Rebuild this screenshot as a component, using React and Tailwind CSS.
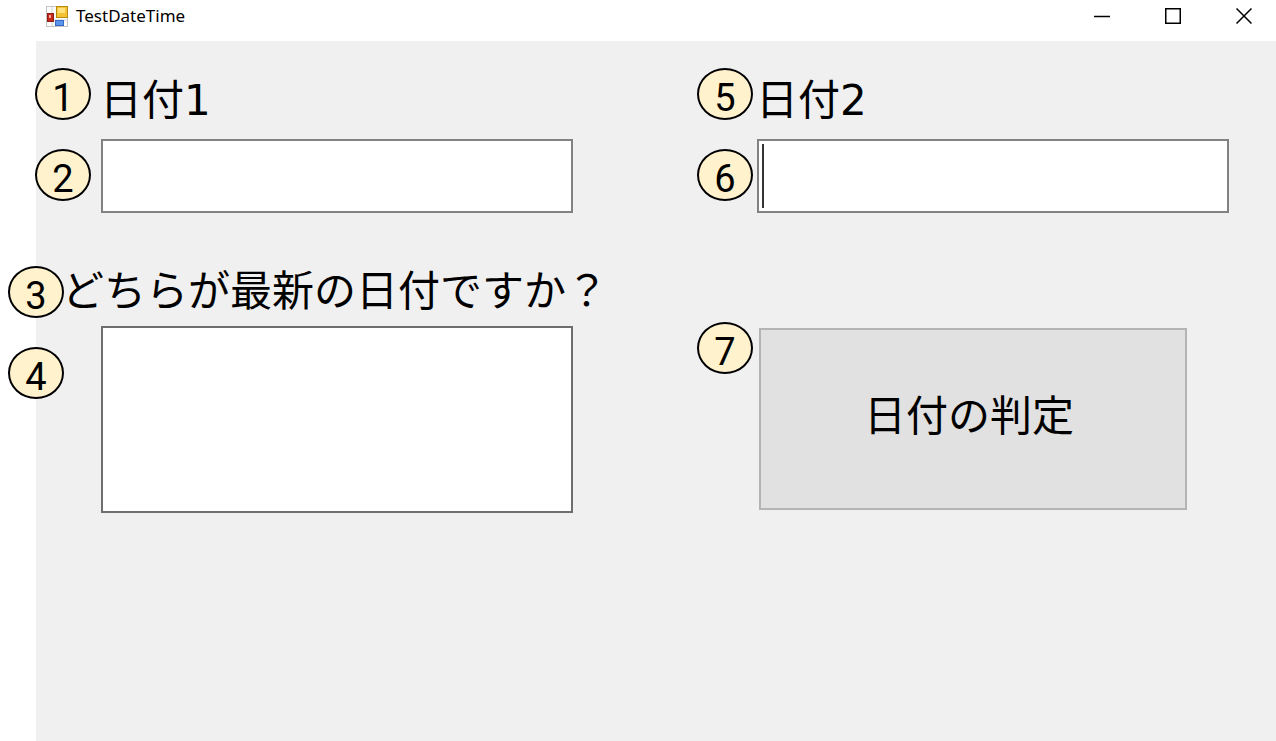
import React, { useState } from 'react';

const labelClass =
    "text-[42px] leading-[52px] whitespace-nowrap font-['DejaVu_Sans','Noto_Sans_CJK_JP',sans-serif]";

const Badge = ({ children, className = '' }) => (
    <span
        className={`flex h-[52px] w-14 shrink-0 items-center justify-center rounded-[50%] border-2 border-black bg-[#fff2cc] pt-2 text-[38px] leading-none font-['Roboto',sans-serif] ${className}`}
    >
        {children}
    </span>
);

const AppIcon = () => (
    <svg width="22" height="21" viewBox="0 0 22 21" aria-hidden="true">
        <rect x="0.5" y="0.5" width="21" height="20" fill="#fdfdfd" stroke="#c4c4c4" />
        <path d="M6 1v19M1 14h20M11 14v6" stroke="#d2d2d2" />
        <rect x="10.5" y="0.5" width="11" height="11" fill="#f3c333" stroke="#b98a12" />
        <rect x="12" y="2" width="7" height="5" fill="#ffe27c" />
        <rect x="1.5" y="7.5" width="6" height="8" fill="#c8271b" stroke="#8f1d14" />
        <rect x="3" y="9" width="2" height="3" fill="#f5a79c" />
        <rect x="9.5" y="14.5" width="8" height="5" fill="#5b94ee" stroke="#3868c4" />
    </svg>
);

const TitleBar = () => (
    <header className="flex h-[41px] items-start justify-between bg-white">
        <div className="flex items-center gap-2 pt-1 pl-[10px]">
            <AppIcon />
            <h1 className="text-[17px] leading-6 font-['Noto_Sans',sans-serif]">TestDateTime</h1>
        </div>
        <div className="flex gap-[7px]">
            <button type="button" aria-label="Minimize" className="flex h-8 w-16 items-center justify-center">
                <svg width="16" height="16" viewBox="0 0 16 16" fill="none" stroke="black" strokeWidth="1.5">
                    <path d="M0 8.5h16" />
                </svg>
            </button>
            <button type="button" aria-label="Maximize" className="flex h-8 w-16 items-center justify-center">
                <svg width="16" height="16" viewBox="0 0 16 16" fill="none" stroke="black" strokeWidth="1.5">
                    <rect x="0.75" y="0.75" width="14.5" height="14.5" />
                </svg>
            </button>
            <button type="button" aria-label="Close" className="flex h-8 w-16 items-center justify-center">
                <svg width="16" height="16" viewBox="0 0 16 16" fill="none" stroke="black" strokeWidth="1.5">
                    <path d="M0.5 0.5l15 15M15.5 0.5l-15 15" />
                </svg>
            </button>
        </div>
    </header>
);

const App = () => {
    const [date1, setDate1] = useState('');
    const [date2, setDate2] = useState('');
    const [result, setResult] = useState('');

    const handleJudge = (e) => {
        e.preventDefault();
        const first = new Date(date1);
        const second = new Date(date2);
        if (isNaN(first) || isNaN(second)) return;
        setResult(first > second ? date1 : date2);
    };

    return (
        <div className="flex min-h-screen flex-col bg-white pl-9 text-black">
            <TitleBar />
            <form
                onSubmit={handleJudge}
                className="grid flex-1 grid-cols-[minmax(0,661fr)_minmax(0,579fr)] content-start bg-[#f0f0f0] pt-[27px]"
            >
                {/* Left column */}
                <div className="-ml-px">
                    <div className="flex h-[71px] items-start gap-[9px]">
                        <Badge>1</Badge>
                        <label htmlFor="date1" className={`pt-[7px] ${labelClass}`}>日付1</label>
                    </div>
                    <div className="flex items-start gap-[10px] pr-[124px]">
                        <Badge className="mt-[10px]">2</Badge>
                        <input
                            id="date1"
                            type="text"
                            value={date1}
                            onChange={(e) => setDate1(e.target.value)}
                            className="h-[74px] min-w-0 flex-1 border-2 border-[#828282] bg-white px-1 text-[42px] outline-none"
                        />
                    </div>
                    <div className="mt-[53px] -ml-[27px] flex">
                        <Badge>3</Badge>
                        <label htmlFor="result" className={`-ml-[2px] ${labelClass}`}>どちらが最新の日付ですか？</label>
                    </div>
                    <div className="mt-2 -ml-[27px] flex gap-[37px] pr-[124px]">
                        <Badge className="mt-[21px]">4</Badge>
                        <textarea
                            id="result"
                            readOnly
                            value={result}
                            className="h-[187px] min-w-0 flex-1 resize-none border-2 border-[#6e6e6e] bg-white px-1 text-[42px] outline-none"
                        />
                    </div>
                </div>

                {/* Right column */}
                <div>
                    <div className="flex h-[71px] items-start gap-[3px]">
                        <Badge>5</Badge>
                        <label htmlFor="date2" className={`pt-[7px] ${labelClass}`}>日付2</label>
                    </div>
                    <div className="flex items-start gap-1 pr-[47px]">
                        <Badge className="mt-[10px]">6</Badge>
                        <div className="relative min-w-0 flex-1">
                            <input
                                id="date2"
                                type="text"
                                value={date2}
                                onChange={(e) => setDate2(e.target.value)}
                                className="block h-[74px] w-full border-2 border-[#828282] bg-white px-1 text-[42px] outline-none"
                            />
                            <span className="absolute top-[5px] left-[5px] h-16 w-[2px] bg-[#333333]" />
                        </div>
                    </div>
                    <div className="mt-[109px] flex gap-[6px] pr-[89px]">
                        <Badge>7</Badge>
                        <button
                            type="submit"
                            className={`mt-[6px] h-[182px] flex-1 border-2 border-[#b4b4b4] bg-[#e1e1e1] pr-2 pb-1 ${labelClass}`}
                        >
                            日付の判定
                        </button>
                    </div>
                </div>
            </form>
        </div>
    );
};

export default App;
